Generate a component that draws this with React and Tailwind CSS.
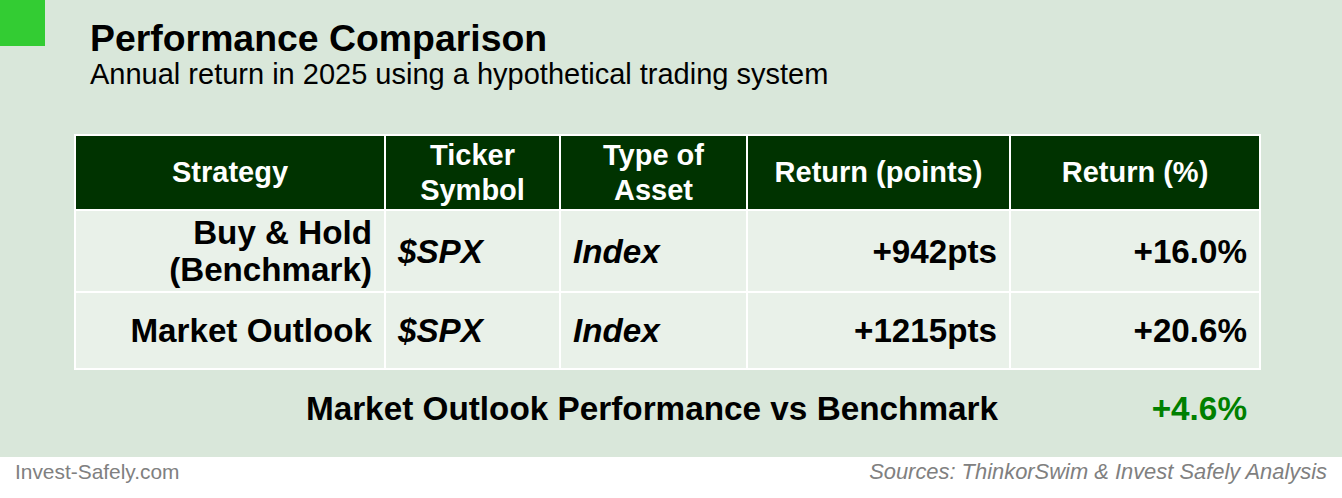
import React from 'react';

const columns = [
  { label: ['Strategy'], width: 'w-[308px]' },
  { label: ['Ticker', 'Symbol'], width: 'w-[173px]' },
  { label: ['Type of', 'Asset'], width: 'w-[185px]' },
  { label: ['Return (points)'], width: 'w-[261px]' },
  { label: ['Return (%)'], width: 'w-[248px]' },
];

const rows = [
  { strategy: ['Buy & Hold', '(Benchmark)'], ticker: '$SPX', asset: 'Index', points: '+942pts', pct: '+16.0%', h: 'h-[80px]' },
  { strategy: ['Market Outlook'], ticker: '$SPX', asset: 'Index', points: '+1215pts', pct: '+20.6%', h: 'h-[75px]' },
];

const App = () => {
  return (
    <div className="w-[1342px] h-[498px] flex flex-col font-['Liberation_Sans',Arial,sans-serif] text-black">
      <div className="h-[457px] bg-[#d9e7da] flex flex-col">
        {/* title block */}
        <div className="flex items-start">
          <div className="w-[45px] h-[46px] bg-[#33cc33] shrink-0" />
          <div className="ml-[45px] pt-[20px]">
            <h1 className="text-[37.4px] leading-[36px] font-bold">Performance Comparison</h1>
            <p className="text-[29px] leading-[36px]">Annual return in 2025 using a hypothetical trading system</p>
          </div>
        </div>

        {/* table */}
        <div className="ml-[74px] mt-[42px] w-[1187px] bg-white p-[2px] flex flex-col gap-[2px]">
          <div className="flex gap-[2px] h-[73px]">
            {columns.map((c, i) => (
              <div key={i} className={`${c.width} bg-[#003300] text-white font-bold text-[29px] leading-[35px] flex flex-col items-center justify-center text-center`}>
                {c.label.map((l) => <span key={l}>{l}</span>)}
              </div>
            ))}
          </div>
          {rows.map((r, i) => (
            <div key={i} className={`flex gap-[2px] ${r.h} font-bold text-[33.2px] leading-[37px]`}>
              <div className="w-[308px] bg-[#e9f1e9] px-3 flex flex-col items-end justify-center text-right">
                {r.strategy.map((s) => <span key={s}>{s}</span>)}
              </div>
              <div className="w-[173px] bg-[#e9f1e9] px-3 flex items-center italic">{r.ticker}</div>
              <div className="w-[185px] bg-[#e9f1e9] px-3 flex items-center italic">{r.asset}</div>
              <div className="w-[261px] bg-[#e9f1e9] px-3 flex items-center justify-end">{r.points}</div>
              <div className="w-[248px] bg-[#e9f1e9] px-3 flex items-center justify-end">{r.pct}</div>
            </div>
          ))}
        </div>

        {/* summary */}
        <div className="ml-[74px] mt-[21px] w-[1187px] flex font-bold text-[33.3px] leading-[36px]">
          <div className="w-[936px] pr-3 text-right">Market Outlook Performance vs Benchmark</div>
          <div className="w-[251px] pr-[14px] text-right text-[#008000]">+4.6%</div>
        </div>
      </div>

      {/* footer */}
      <div className="flex-1 bg-white flex justify-between items-start pt-[3px] px-[15px] leading-[24px] text-[#808080]">
        <span className="text-[20.9px]">Invest-Safely.com</span>
        <span className="italic text-[21.9px]">Sources: ThinkorSwim &amp; Invest Safely Analysis</span>
      </div>
    </div>
  );
};

export default App;
